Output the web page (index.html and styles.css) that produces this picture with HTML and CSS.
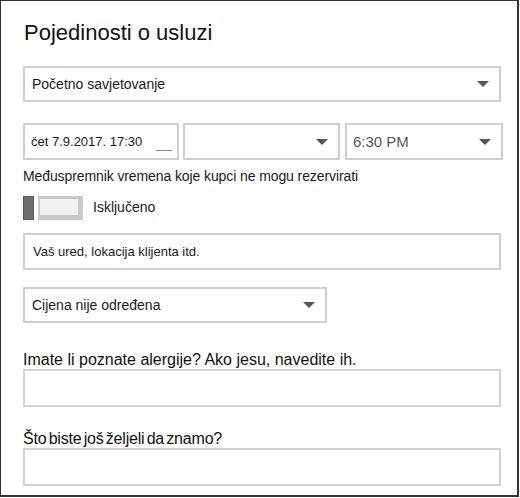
FILE: index.html
```html
<!DOCTYPE html>
<html lang="hr">
<head>
<meta charset="utf-8">
<link rel="stylesheet" href="styles.css">
</head>
<body>
<div class="frame">
  <h1 class="title">Pojedinosti o usluzi</h1>

  <div class="field select wide s1">
    <span class="val">Početno savjetovanje</span>
    <span class="arrow"></span>
  </div>

  <div class="row">
    <div class="field date">
      <span class="val small">čet 7.9.2017. 17:30</span>
      <span class="dash"></span>
    </div>
    <div class="field select mid">
      <span class="arrow"></span>
    </div>
    <div class="field select time">
      <span class="val gray">6:30 PM</span>
      <span class="arrow"></span>
    </div>
  </div>

  <div class="label-sm">Međuspremnik vremena koje kupci ne mogu rezervirati</div>

  <div class="toggle-row">
    <span class="knob"></span>
    <span class="track"></span>
    <span class="toggle-text">Isključeno</span>
  </div>

  <div class="field wide loc">
    <span class="val small">Vaš ured, lokacija klijenta itd.</span>
  </div>

  <div class="field select price">
    <span class="val">Cijena nije određena</span>
    <span class="arrow"></span>
  </div>

  <div class="q q1">Imate li poznate alergije? Ako jesu, navedite ih.</div>
  <div class="field wide answer"></div>

  <div class="q q2">Što biste još željeli da znamo?</div>
  <div class="field wide answer"></div>
</div>
</body>
</html>
```

FILE: styles.css
```css
html, body {
  margin: 0;
  padding: 0;
  background: #ffffff;
}

.frame {
  box-sizing: border-box;
  width: 519px;
  height: 497px;
  border-left: 1px solid #333333;
  border-top: 1px solid #333333;
  border-right: 2px solid #333333;
  border-bottom: 2px solid #333333;
  padding: 0 0 0 22px;
  font-family: "Liberation Sans", Arial, sans-serif;
  color: #1a1a1a;
  display: flex;
  flex-direction: column;
  align-items: flex-start;
}

.title {
  margin: 19px 0 0 1px;
  font-family: "Liberation Sans", Arial, sans-serif;
  font-weight: normal;
  font-size: 22px;
  line-height: 26px;
  color: #111111;
}

.field {
  box-sizing: border-box;
  border: 2px solid #cfcfcf;
  background: #ffffff;
  display: flex;
  align-items: center;
  position: relative;
}

.wide {
  width: 478px;
}

.s1 {
  margin-top: 20px;
  height: 36px;
  padding-left: 7px;
}

.val {
  font-size: 14px;
  color: #1a1a1a;
}

.val.small {
  font-size: 13px;
}

.val.gray {
  color: #555555;
  font-size: 15px;
}

.arrow {
  position: absolute;
  right: 10px;
  top: 50%;
  margin-top: -3px;
  width: 0;
  height: 0;
  border-left: 6px solid transparent;
  border-right: 6px solid transparent;
  border-top: 6px solid #555555;
}

.row {
  margin-top: 21px;
  display: flex;
  gap: 4px;
}

.row .field {
  height: 37px;
}

.date {
  width: 156px;
  padding-left: 6px;
}

.dash {
  position: absolute;
  left: 131px;
  top: 25px;
  width: 16px;
  height: 1px;
  background: #8a8a8a;
}

.mid {
  width: 157px;
}

.time {
  margin-left: 1px;
  width: 158px;
  padding-left: 6px;
}

.label-sm {
  margin-top: 8px;
  font-size: 14px;
  line-height: 17px;
  letter-spacing: -0.1px;
  color: #1a1a1a;
}

.toggle-row {
  margin-top: 11px;
  display: flex;
  align-items: flex-start;
  height: 24px;
}

.knob {
  box-sizing: border-box;
  width: 11px;
  height: 24px;
  background: #6e6e6e;
  border: 1px solid #5a5a5a;
}

.track {
  box-sizing: border-box;
  margin-left: 4px;
  width: 45px;
  height: 24px;
  background: #f1f1f1;
  border-top: 3px solid #cacaca;
  border-left: 2px solid #cacaca;
  border-right: 5px solid #cacaca;
  border-bottom: 5px solid #cacaca;
}

.toggle-text {
  margin-left: 10px;
  margin-top: 3px;
  font-size: 14px;
  color: #1a1a1a;
}

.loc {
  margin-top: 13px;
  height: 37px;
  padding-left: 8px;
}

.price {
  margin-top: 17px;
  width: 304px;
  height: 36px;
  padding-left: 7px;
}

.q {
  font-size: 16px;
  line-height: 19px;
  color: #111111;
}

.q1 {
  margin-top: 27px;
}

.q2 {
  margin-top: 22px;
  word-spacing: -2px;
  letter-spacing: -0.2px;
}

.answer {
  height: 38px;
  border-color: #d2d2d2;
}
```
